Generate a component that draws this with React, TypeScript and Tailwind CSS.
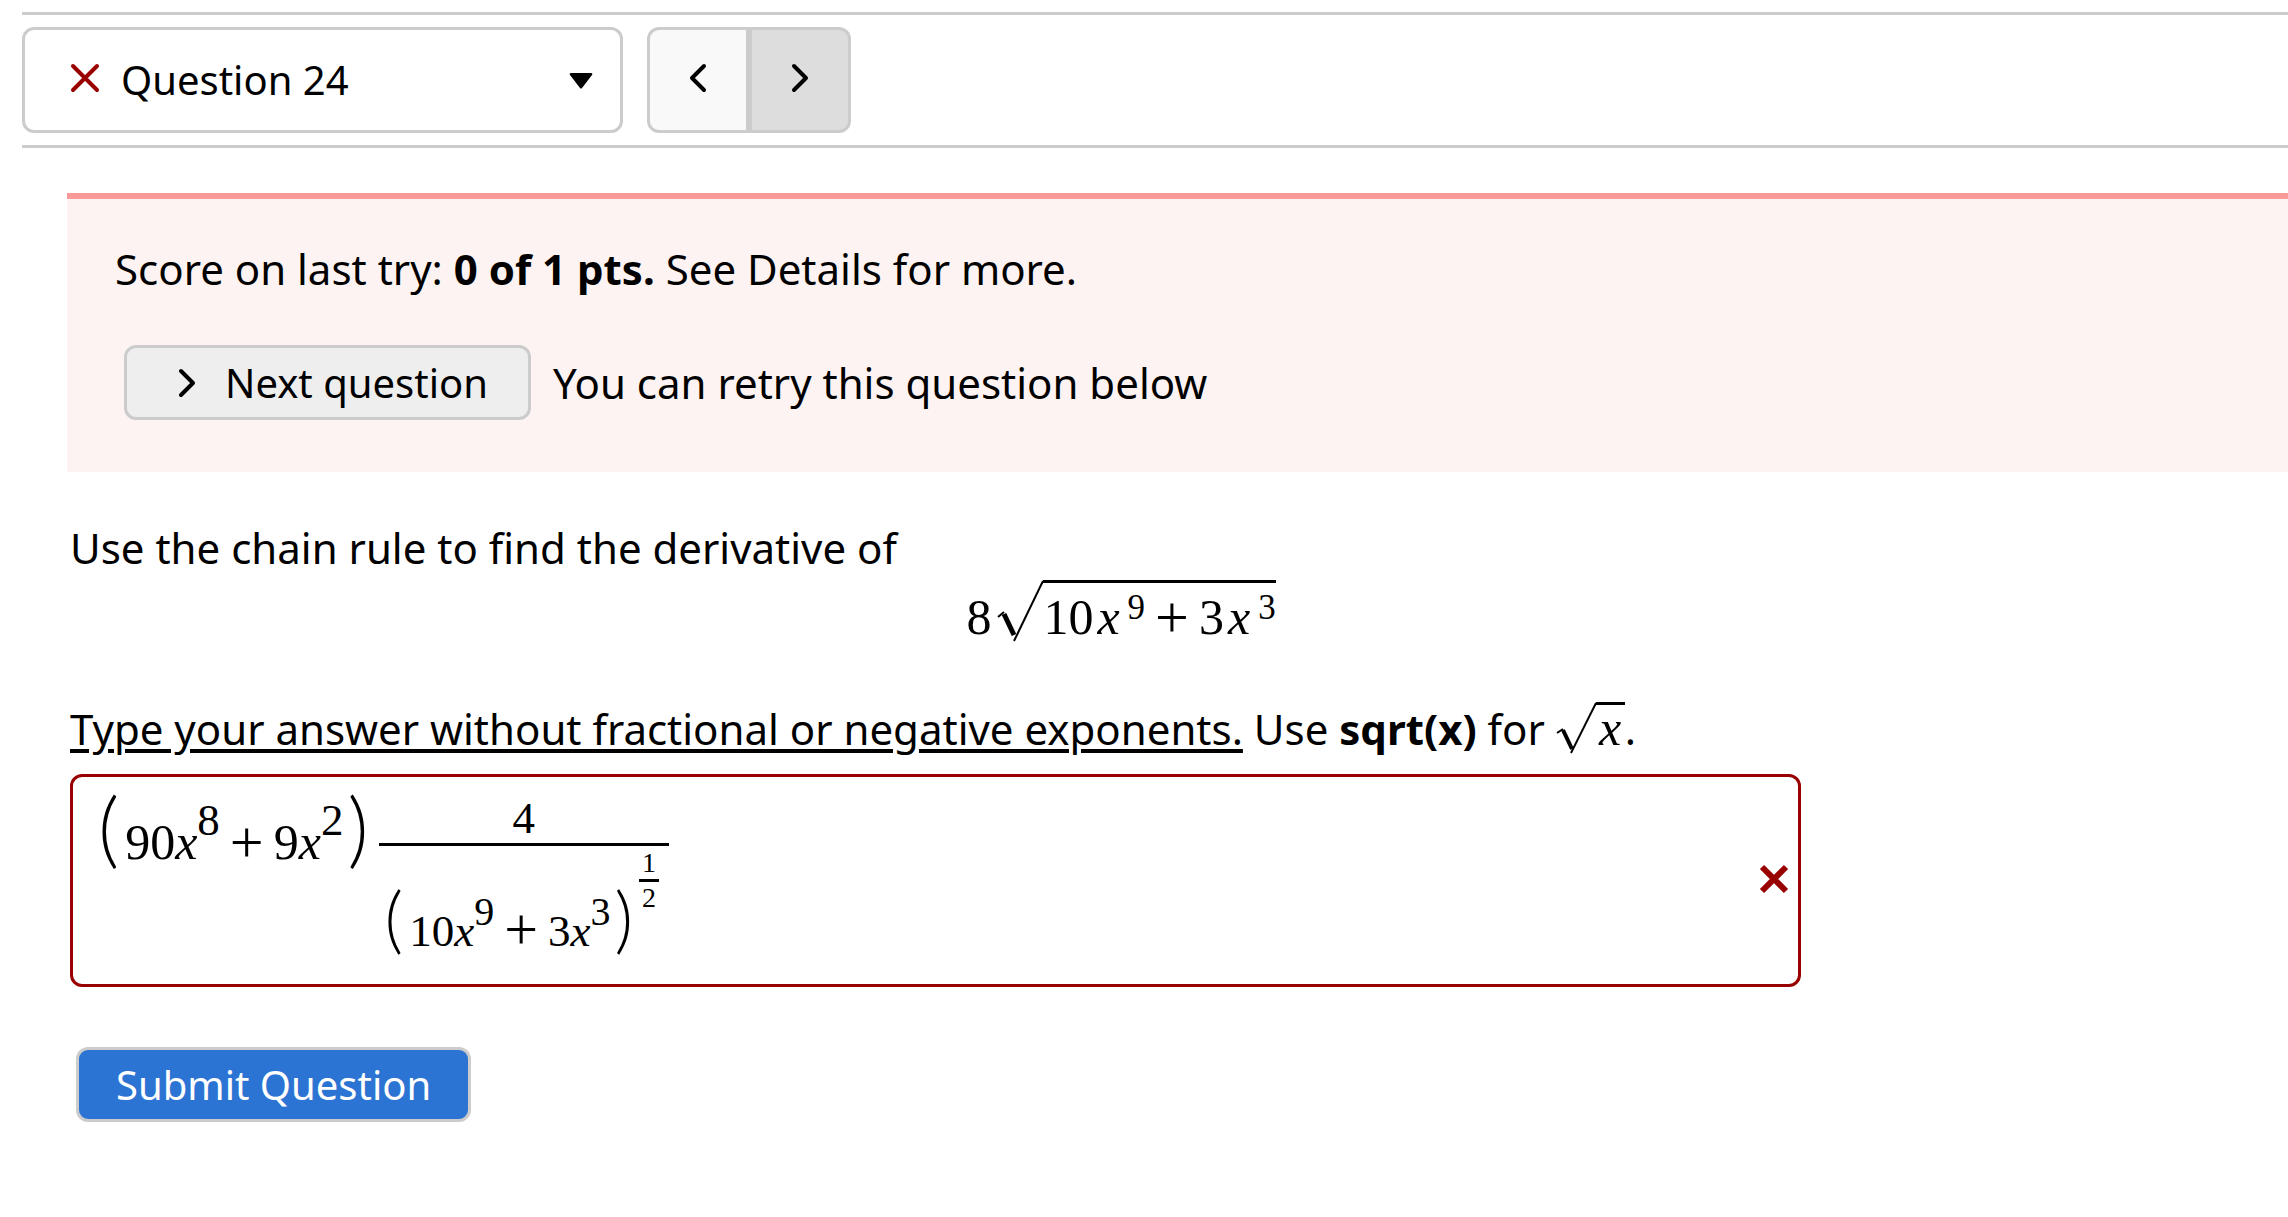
import type { ReactNode } from 'react'

const buttonBase =
  'flex h-[75px] items-center rounded-xl border-[3px] border-[#ccc] text-[40px] leading-[60px]'

function Chevron({ flip = false }: { flip?: boolean }) {
  return (
    <svg aria-hidden="true" className="h-8 w-5" viewBox="0 0 20 32" fill="none" stroke="currentColor" strokeWidth="4" strokeLinecap="round" strokeLinejoin="round">
      <path d={flip ? 'M16 4 4 16l12 12' : 'M4 4l12 12L4 28'} />
    </svg>
  )
}

function Sup({ children }: { children: ReactNode }) {
  return <sup className="static ml-1 align-[15px] text-[35px] leading-none">{children}</sup>
}

// exponent inside the answer preview, set higher and larger than in the question
function AnswerSup({ children }: { children: ReactNode }) {
  return <sup className="static align-[24px] text-[45px] leading-none">{children}</sup>
}

function DenomSup({ children }: { children: ReactNode }) {
  return <sup className="static align-[21px] text-[40px] leading-none">{children}</sup>
}

function Plus() {
  return <span className="mx-2.5 align-[-3px] text-[60px] leading-none">+</span>
}

// tall thin delimiters around a group
function Parens({ small = false, children }: { small?: boolean; children: ReactNode }) {
  const paren = small
    ? "align-[1px] font-['Lato',sans-serif] text-[72px] font-light leading-none"
    : "align-[1px] font-['Lato',sans-serif] text-[82px] font-light leading-none"
  return (
    <>
      <span className={paren}>(</span>
      <span className="ml-1.5 mr-1">{children}</span>
      <span className={paren}>)</span>
    </>
  )
}

function Header() {
  return (
    <nav aria-label="Questions" className="flex items-center gap-6 border-y-[3px] border-[#ccc] py-3">
      <div className="relative w-[601px]">
        <select
          aria-label="Select question"
          className="h-[106px] w-full appearance-none rounded-xl border-[3px] border-[#ccc] bg-white pl-24 text-[40px]"
        >
          <option>Question 24</option>
        </select>
        <svg aria-hidden="true" className="pointer-events-none absolute left-[47px] top-[35px] size-8 text-[#900]" viewBox="0 0 32 32" stroke="currentColor" strokeWidth="4" strokeLinecap="round">
          <path d="M4 4l24 24M28 4 4 28" />
        </svg>
        <svg aria-hidden="true" className="pointer-events-none absolute right-[30px] top-[46px] h-4 w-6" viewBox="0 0 24 16">
          <path d="M2 0h20q2 0 1 2L13 15q-1 1-2 0L1 2Q0 0 2 0z" />
        </svg>
      </div>
      <div className="flex h-[106px] w-[204px] gap-1.5 overflow-hidden rounded-xl border-[3px] border-[#ccc] bg-[#ccc]">
        <button type="button" aria-label="Previous question" className="flex flex-1 items-center justify-center bg-[#f9f9f9] pb-1">
          <Chevron flip />
        </button>
        <button type="button" aria-label="Next question" className="flex flex-1 items-center justify-center bg-[#ddd] pb-1">
          <Chevron />
        </button>
      </div>
    </nav>
  )
}

function ScoreAlert() {
  return (
    <section className="ml-[45px] mt-[45px] border-t-[6px] border-[#f89a98] bg-[#fdf3f2] pb-[52px] pl-12 pt-10">
      <p>
        Score on last try: <strong className="font-bold">0 of 1 pts.</strong> See Details for more.
      </p>
      <div className="mt-[46px] flex items-center gap-[22px] pl-[9px]">
        <button type="button" className={`${buttonBase} gap-7 bg-[#eee] pl-[50px] pr-10`}>
          <Chevron />
          Next question
        </button>
        <span>You can retry this question below</span>
      </div>
    </section>
  )
}

function Formula() {
  return (
    <div className="mr-[116px] flex h-[121px] items-start justify-center pt-0.5 font-['Liberation_Serif',serif] text-[50px]">
      <span className="leading-[74px]">8</span>
      <svg aria-hidden="true" className="ml-1 h-[62px] w-[48px] shrink-0" viewBox="0 0 48 62" fill="none" stroke="black">
        <path strokeWidth="2" d="M3 37l6-5" />
        <path strokeWidth="5" d="M9 34l10 21" />
        <path strokeWidth="2" strokeLinejoin="bevel" d="M19 61L48 1" />
      </svg>
      <span className="border-t-[3px] border-black leading-[68px]">
        10<i className="mx-1">x</i><Sup>9</Sup><Plus />3<i className="mx-1">x</i><Sup>3</Sup>
      </span>
    </div>
  )
}

function AnswerBox() {
  return (
    <div
      role="textbox"
      aria-label="Answer"
      tabIndex={0}
      className="mt-[15px] flex w-full max-w-[1731px] items-start rounded-xl border-[3px] border-[#900] pb-[3px] pl-[25px] pr-2 font-['Liberation_Serif',serif]"
    >
      <span className="text-[50px] leading-[130px]">
        <Parens>
          90<i>x</i><AnswerSup>8</AnswerSup><Plus />9<i>x</i><AnswerSup>2</AnswerSup>
        </Parens>
      </span>
      <span className="ml-2.5 flex flex-col text-[45px]">
        <span className="pt-4 text-center leading-[50px]">4</span>
        <span className="flex items-start border-t-[3px] border-black pl-1.5 pr-2.5">
          <span className="pt-[35px] leading-[100px]">
            <Parens small>
              10<i>x</i><DenomSup>9</DenomSup><Plus />3<i>x</i><DenomSup>3</DenomSup>
            </Parens>
          </span>
          <span className="ml-1.5 flex w-5 flex-col text-center text-[28px]">
            <span className="leading-[33px]">1</span>
            <span className="border-t-[3px] border-black leading-[32px]">2</span>
          </span>
        </span>
      </span>
      <svg aria-label="Incorrect" className="ml-auto size-8 self-center text-[#900]" viewBox="0 0 32 32" stroke="currentColor" strokeWidth="6">
        <path d="M4 4l24 24M28 4 4 28" />
      </svg>
    </div>
  )
}

export default function App() {
  return (
    <main className="overflow-x-hidden bg-white pb-20 pl-[22px] pt-3 font-['Noto_Sans',sans-serif] text-[42px] leading-[60px] text-black [font-variant-ligatures:none]">
      <Header />
      <ScoreAlert />
      <section className="ml-12 mt-[46px]">
        <p>Use the chain rule to find the derivative of</p>
        <Formula />
        <p className="flex items-start">
          <span className="whitespace-pre">
            <u className="underline decoration-[4px] underline-offset-4">Type your answer without fractional or negative exponents.</u>
            {' Use '}
            <strong className="font-bold">sqrt(x)</strong>
            {' for '}
          </span>
          <svg aria-hidden="true" className="mt-[3px] h-[52px] w-10 shrink-0" viewBox="0 0 40 52" fill="none" stroke="black">
            <path strokeWidth="2" d="M1 31l6-4" />
            <path strokeWidth="4" d="M7 28l9 19" />
            <path strokeWidth="2" strokeLinejoin="bevel" d="M15 51L40 1" />
          </svg>
          <i className="mt-[3px] w-[29px] border-t-[3px] border-black text-center font-['Liberation_Serif',serif] text-[50px] leading-[46px]">x</i>
          .
        </p>
        <AnswerBox />
        <button type="button" className={`${buttonBase} ml-1.5 mt-[60px] bg-[#2b74d3] px-[37px] text-white`}>
          Submit Question
        </button>
      </section>
    </main>
  )
}
